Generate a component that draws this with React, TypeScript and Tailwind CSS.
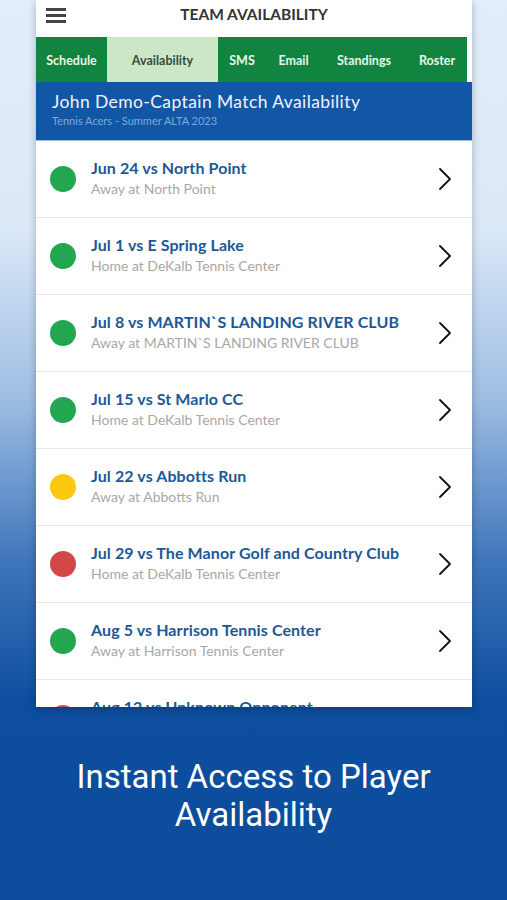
import React from "react";

type Match = {
  title: string;
  place: string;
  status: "yes" | "maybe" | "no";
};

const matches: Match[] = [
  { title: "Jun 24 vs North Point", place: "Away at North Point", status: "yes" },
  { title: "Jul 1 vs E Spring Lake", place: "Home at DeKalb Tennis Center", status: "yes" },
  { title: "Jul 8 vs MARTIN`S LANDING RIVER CLUB", place: "Away at MARTIN`S LANDING RIVER CLUB", status: "yes" },
  { title: "Jul 15 vs St Marlo CC", place: "Home at DeKalb Tennis Center", status: "yes" },
  { title: "Jul 22 vs Abbotts Run", place: "Away at Abbotts Run", status: "maybe" },
  { title: "Jul 29 vs The Manor Golf and Country Club", place: "Home at DeKalb Tennis Center", status: "no" },
  { title: "Aug 5 vs Harrison Tennis Center", place: "Away at Harrison Tennis Center", status: "yes" },
  { title: "Aug 12 vs Unknown Opponent", place: "Home at DeKalb Tennis Center", status: "no" },
];

const dotColor = {
  yes: "bg-[#22a64f]",
  maybe: "bg-[#fbc80f]",
  no: "bg-[#d24848]",
};

const tabs = [
  { label: "Schedule", w: "w-[71px]" },
  { label: "Availability", w: "w-[111px]", active: true },
  { label: "SMS", w: "w-[48px]" },
  { label: "Email", w: "w-[55px]" },
  { label: "Standings", w: "w-[86px]" },
  { label: "Roster", w: "w-[60px]" },
];

function Chevron() {
  return (
    <svg width="14" height="24" viewBox="0 0 14 24" fill="none">
      <polyline points="2,2 12,12 2,22" stroke="#111" strokeWidth="1.8" strokeLinecap="round" strokeLinejoin="round" />
    </svg>
  );
}

export default function App() {
  return (
    <div className="flex h-[900px] w-[507px] flex-col overflow-hidden bg-[linear-gradient(to_bottom,#e3eefb_0px,#dbe8f8_230px,#9dbde3_400px,#3f76bb_560px,#0d4e9f_700px,#0b4c9c_100%)] font-['Lato',sans-serif]">
      <div className="ml-[36px] h-[707px] w-[436px] shrink-0 overflow-hidden bg-white shadow-[0_2px_8px_rgba(0,0,0,0.25)]">
        <header className="relative flex h-[37px] items-start justify-center pt-[4px]">
          <div className="absolute left-[10px] top-[8px] flex flex-col gap-[3.5px]">
            <span className="block h-[2.5px] w-[20px] bg-[#444]" />
            <span className="block h-[2.5px] w-[20px] bg-[#444]" />
            <span className="block h-[2.5px] w-[20px] bg-[#444]" />
          </div>
          <h1 className="text-[15.5px] font-bold leading-[20px] text-[#333]">TEAM AVAILABILITY</h1>
        </header>

        <nav className="flex h-[45px] w-[431px] bg-[#11843f]">
          {tabs.map((t) => (
            <div
              key={t.label}
              className={`${t.w} flex items-center justify-center pt-[3px] text-[12.5px] font-bold ${
                t.active ? "bg-[#cbe7c8] text-[#3b4a3b]" : "text-[#e9f5ec]"
              }`}
            >
              {t.label}
            </div>
          ))}
        </nav>

        <div className="flex h-[58px] flex-col justify-center bg-[#1257a6] pb-[4px] pl-[16px]">
          <div className="text-[17.5px] leading-[22px] tracking-[0.4px] text-[#eef4fb]">John Demo-Captain Match Availability</div>
          <div className="text-[11px] leading-[15px] text-[#7ea9dc]">Tennis Acers - Summer ALTA 2023</div>
        </div>

        <ul className="border-t border-[#9fbbe0]">
          {matches.map((m) => (
            <li key={m.title} className="flex h-[77px] items-center border-b border-[#e8e8e8] pl-[14px] pr-[20px]">
              <span className={`h-[26px] w-[26px] shrink-0 rounded-full ${dotColor[m.status]}`} />
              <div className="ml-[15px] flex-1 pb-[2px]">
                <div className="text-[16px] font-bold leading-[21px] tracking-[0.1px] text-[#1d5896]">{m.title}</div>
                <div className="text-[14px] leading-[22px] text-[#a8a8a8]">{m.place}</div>
              </div>
              <Chevron />
            </li>
          ))}
        </ul>
      </div>

      <p className="mt-[51px] px-4 text-center font-['Roboto',sans-serif] text-[33px] leading-[38px] text-white">
        Instant Access to Player
        <br />
        Availability
      </p>
    </div>
  );
}
